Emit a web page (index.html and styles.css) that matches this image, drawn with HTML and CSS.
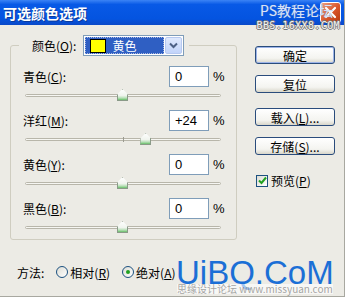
FILE: index.html
```html
<!DOCTYPE html>
<html lang="zh-CN">
<head>
  <meta charset="UTF-8">
  <title>可选颜色选项</title>
  <link rel="stylesheet" href="styles.css">
</head>
<body>
  <div class="dialog">
    <div class="titlebar">
      <span class="title">可选颜色选项</span>
      <span class="close">
        <svg width="13" height="13" viewBox="0 0 13 13"><path d="M2 2 L11 11 M11 2 L2 11" stroke="#fff" stroke-width="2.2" stroke-linecap="round"/></svg>
      </span>
      <div class="mark-top">
        <span class="mark-a">PS教程论坛</span>
        <span class="mark-b">BBS.16XX8.COM</span>
      </div>
    </div>

    <div class="content">
      <div class="main">
        <fieldset class="group">
          <legend class="legend">
            <span class="label">颜色(<u>O</u>):</span>
            <span class="select">
              <span class="select-value">
                <span class="swatch"></span>黄色
              </span>
              <span class="select-btn">
                <svg width="9" height="7" viewBox="0 0 9 7"><path d="M1 1.5 L4.5 5 L8 1.5" fill="none" stroke="#4d6185" stroke-width="2"/></svg>
              </span>
            </span>
          </legend>

          <div class="row">
            <div class="field">
              <span class="label">青色(<u>C</u>):</span>
              <span class="input">0</span>
              <span class="pct">%</span>
            </div>
            <div class="slider">
              <div class="track">
                <span class="thumb" style="left: 50%"></span>
              </div>
            </div>
          </div>

          <div class="row">
            <div class="field">
              <span class="label">洋红(<u>M</u>):</span>
              <span class="input">+24</span>
              <span class="pct">%</span>
            </div>
            <div class="slider">
              <div class="track">
                <span class="tick"></span>
                <span class="thumb" style="left: 62%"></span>
              </div>
            </div>
          </div>

          <div class="row">
            <div class="field">
              <span class="label">黄色(<u>Y</u>):</span>
              <span class="input">0</span>
              <span class="pct">%</span>
            </div>
            <div class="slider">
              <div class="track">
                <span class="thumb" style="left: 50%"></span>
              </div>
            </div>
          </div>

          <div class="row">
            <div class="field">
              <span class="label">黑色(<u>B</u>):</span>
              <span class="input">0</span>
              <span class="pct">%</span>
            </div>
            <div class="slider">
              <div class="track">
                <span class="thumb" style="left: 50%"></span>
              </div>
            </div>
          </div>
        </fieldset>

        <div class="method">
          <span class="label">方法:</span>
          <span class="radio"></span>
          <span class="opt">相对(<u>R</u>)</span>
          <span class="radio on"></span>
          <span class="opt">绝对(<u>A</u>)</span>
        </div>
      </div>

      <div class="side">
        <span class="btn default">确定</span>
        <span class="btn">复位</span>
        <span class="btn gap">载入(<u>L</u>)...</span>
        <span class="btn">存储(<u>S</u>)...</span>
        <div class="check">
          <span class="box">
            <svg width="9" height="9" viewBox="0 0 9 9"><path d="M1 4.5 L3.5 7 L8 1.5" fill="none" stroke="#21a121" stroke-width="2"/></svg>
          </span>
          <span>预览(<u>P</u>)</span>
        </div>
      </div>
    </div>

    <div class="mark-bottom">
      <span class="mark-big">UiBQ.CoM</span>
      <span class="mark-small">思缘设计论坛 www.missyuan.com</span>
    </div>
  </div>
</body>
</html>
```

FILE: styles.css
```css
body {
  margin: 0;
  background: #fff;
  font-family: "Noto Sans CJK SC", "Liberation Sans", sans-serif;
  font-size: 12px;
  color: #000;
}

.dialog {
  position: relative;
  width: 344px;
  height: 296px;
  background: #ecebe5;
  border-right: 1px solid #a8a8a0;
  border-bottom: 1px solid #a8a8a0;
  display: flex;
  flex-direction: column;
}

/* 标题栏 */
.titlebar {
  position: relative;
  height: 25px;
  display: flex;
  align-items: center;
  justify-content: space-between;
  background: linear-gradient(#3b83f5, #0859e6 18%, #0454e0 75%, #0a49c8);
}
.title {
  padding-left: 3px;
  color: #fff;
  font-size: 14px;
  font-weight: bold;
  text-shadow: 1px 1px 0 #0a3a9c;
}
.close {
  width: 19px;
  height: 19px;
  margin-right: 3px;
  border: 1px solid #fff;
  border-radius: 3px;
  background: linear-gradient(135deg, #f0a080, #d8552a 55%, #b83a10);
  display: flex;
  align-items: center;
  justify-content: center;
}
.mark-top {
  position: absolute;
  right: 4px;
  top: 0;
  display: flex;
  flex-direction: column;
  align-items: flex-end;
}
.mark-a {
  margin-right: 7px;
  color: #d7e2f8;
  font-size: 14px;
  line-height: 20px;
  text-shadow: 0 0 1px #7a90c0;
}
.mark-b {
  color: #f4f4f4;
  font-family: "DejaVu Sans Mono", monospace;
  font-size: 10px;
  line-height: 12px;
  letter-spacing: 0.4px;
  text-shadow: 1px 0 0 #777, -1px 0 0 #777, 0 1px 0 #777, 0 -1px 0 #777;
}

.content {
  display: flex;
  flex: 1;
}

.main {
  width: 240px;
  padding: 10px 0 0 10px;
  box-sizing: border-box;
}

/* 分组框 */
.group {
  margin: 0;
  width: 227px;
  height: 205px;
  box-sizing: border-box;
  padding: 10px 8px 0 8px;
  border: 1px solid #cfcdc0;
  border-radius: 3px;
}
.legend {
  padding: 0 5px 0 13px;
  display: flex;
  align-items: center;
}
.legend .label {
  margin-right: 7px;
}
.select {
  width: 101px;
  height: 21px;
  box-sizing: border-box;
  border: 1px solid #7f9db9;
  background: #fff;
  display: flex;
  padding: 1px;
}
.select-value {
  flex: 1;
  display: flex;
  align-items: center;
  background: #2f5fc3;
  color: #fff;
  outline: 1px dotted #a8b8e0;
  outline-offset: -1px;
  margin-right: 1px;
}
.swatch {
  width: 14px;
  height: 12px;
  margin: 0 6px 0 5px;
  background: #ffff00;
  border: 1px solid #000;
}
.select-btn {
  width: 15px;
  border: 1px solid #b7c9f0;
  border-radius: 2px;
  background: linear-gradient(#dfe9fd, #c2d4fa);
  display: flex;
  align-items: center;
  justify-content: center;
}

.row {
  height: 44px;
  padding-left: 4px;
}
.field {
  display: flex;
  align-items: center;
  height: 21px;
}
.field .label {
  width: 146px;
}
.input {
  width: 40px;
  height: 21px;
  box-sizing: border-box;
  border: 1px solid #7f9db9;
  background: #fff;
  padding-left: 5px;
  font-family: "Liberation Sans", sans-serif;
  font-size: 13px;
  line-height: 19px;
}
.pct {
  margin-left: 4px;
  font-family: "Liberation Sans", sans-serif;
  font-size: 13px;
}

/* 滑块 */
.slider {
  height: 23px;
  padding: 7px 0 0 2px;
  box-sizing: border-box;
}
.track {
  position: relative;
  width: 196px;
  height: 3px;
  box-sizing: border-box;
  border: 1px solid #b8b6aa;
  border-radius: 2px;
  background: #f6f6f2;
}
.tick {
  position: absolute;
  left: 50%;
  top: -2px;
  width: 1px;
  height: 5px;
  background: #9a9a90;
}
.thumb {
  position: absolute;
  top: -6px;
  width: 11px;
  height: 12px;
  margin-left: -6px;
  background: linear-gradient(#fff, #f0f4ee 55%, #b8e0b8 75%, #3fae3f);
  clip-path: polygon(50% 0, 100% 45%, 100% 100%, 0 100%, 0 45%);
}
.thumb::after {
  content: "";
  position: absolute;
  inset: 0;
  box-shadow: inset 0 0 0 1px #8a9a88;
  clip-path: polygon(50% 0, 100% 45%, 100% 100%, 0 100%, 0 45%);
}

/* 方法 */
.method {
  margin: 24px 0 0 7px;
  display: flex;
  align-items: center;
  height: 16px;
}
.method .label {
  margin-right: 12px;
}
.radio {
  width: 12px;
  height: 12px;
  box-sizing: border-box;
  border: 1px solid #1c5180;
  border-radius: 50%;
  background: linear-gradient(135deg, #dcdcd4, #fff);
  display: flex;
  align-items: center;
  justify-content: center;
  margin-right: 2px;
}
.radio.on::after {
  content: "";
  width: 4px;
  height: 4px;
  border-radius: 50%;
  background: #21a121;
}
.opt {
  margin-right: 12px;
}

/* 右侧按钮 */
.side {
  padding: 21px 0 0 15px;
  display: flex;
  flex-direction: column;
  align-items: flex-start;
}
.btn {
  width: 80px;
  height: 18px;
  box-sizing: border-box;
  border: 1px solid #2a4c7c;
  border-radius: 3px;
  background: linear-gradient(#fff, #f4f4f0 70%, #d8d6ca);
  display: flex;
  align-items: center;
  justify-content: center;
  margin-bottom: 11px;
}
.btn.default {
  box-shadow: inset 0 0 0 1px #9db4e8;
}
.btn.gap {
  margin-top: 4px;
}
.check {
  margin-top: 6px;
  margin-left: 1px;
  display: flex;
  align-items: center;
}
.box {
  width: 12px;
  height: 12px;
  box-sizing: border-box;
  border: 1px solid #1c5180;
  background: linear-gradient(135deg, #dcdcd4, #fff);
  display: flex;
  align-items: center;
  justify-content: center;
  margin-right: 3px;
}

/* 水印 */
.mark-bottom {
  position: absolute;
  left: 176px;
  top: 256px;
  display: flex;
  flex-direction: column;
  align-items: center;
}
.mark-big {
  font-family: "Liberation Sans", sans-serif;
  font-size: 33px;
  line-height: 1;
  color: #1b6fd6;
}
.mark-small {
  margin-top: -5px;
  font-size: 10px;
  line-height: 1;
  color: rgba(90, 90, 90, 0.55);
  background: rgba(255, 255, 255, 0.6);
}
```
